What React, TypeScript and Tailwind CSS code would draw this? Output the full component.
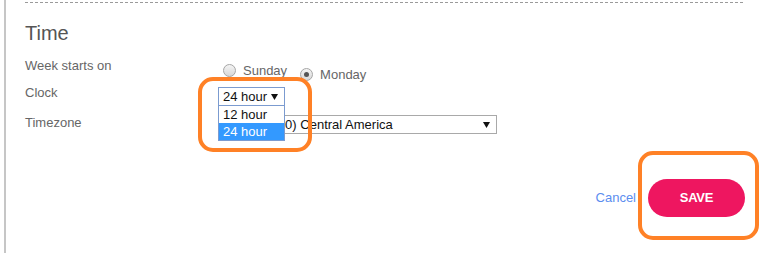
import React from 'react';

const Radio = ({ label, checked }: { label: string; checked?: boolean }) => (
  <div className="flex items-center">
    <span className="flex h-[13px] w-[13px] items-center justify-center rounded-full border border-[#a6a6a6] bg-gradient-to-b from-[#f4f4f4] to-[#d8d8d8]">
      {checked && <span className="h-[5px] w-[5px] rounded-full bg-[#555]" />}
    </span>
    <span className="ml-[7px] text-[13px] leading-[15px] text-[#666]">{label}</span>
  </div>
);

const Arrow = () => (
  <svg width="7" height="6" viewBox="0 0 7 6" className="shrink-0">
    <path d="M0 0 H7 L3.5 6 Z" fill="#111" />
  </svg>
);

export default function App() {
  return (
    <div className="relative h-[253px] w-[767px] overflow-hidden bg-white font-['Liberation_Sans',Arial,sans-serif]">
      <div className="ml-1 flex h-full flex-col border-l-2 border-[#c6c6c6] pl-[19px] pr-[22px]">
        <div className="mt-[2px] h-px bg-[repeating-linear-gradient(to_right,#9a9a9a_0_3px,transparent_3px_5px)]" />

        <h2 className="mt-[19px] text-[20px] leading-[23px] text-[#555]">Time</h2>

        <div className="mt-[13px] grid grid-cols-[193px_1fr]">
          {/* week starts on */}
          <div className="h-[27px] text-[13px] leading-[15px] text-[#666]">Week starts on</div>
          <div className="mt-[5px] flex h-[22px] gap-[15px] pl-[5px]">
            <div className="-mr-[2px]"><Radio label="Sunday" /></div>
            <Radio label="Monday" checked />
          </div>

          {/* clock */}
          <div className="h-[30px] text-[13px] leading-[15px] text-[#666]">Clock</div>
          <div className="relative z-10 h-[30px]">
            <div className="mt-[2px] flex h-[19px] w-[67px] items-center justify-between border border-[#7b9bd0] bg-white pl-[4px] pr-[6px] text-[13px] text-[#111]">
              <span>24 hour</span>
              <Arrow />
            </div>
            <div className="absolute left-0 top-[20px] w-[67px] border border-[#7b9bd0] bg-white text-[13px] leading-[17px] text-[#111]">
              <div className="pl-[4px]">12 hour</div>
              <div className="bg-[#3399ff] pl-[4px] text-white">24 hour</div>
            </div>
          </div>

          {/* timezone */}
          <div className="text-[13px] leading-[15px] text-[#666]">Timezone</div>
          <div className="flex h-[19px] w-[279px] items-center justify-between border border-[#a9a9a9] bg-white pl-[4px] pr-[6px] text-[13px] text-[#111]">
            <span>(GMT-06:00) Central America</span>
            <Arrow />
          </div>
        </div>

        <div className="mt-[45px] flex items-center justify-end gap-[12px]">
          <button className="text-[13px] text-[#5b8def]">Cancel</button>
          <button className="h-[38px] w-[97px] rounded-full bg-[#ee1660] text-[13px] font-bold tracking-[-0.2px] text-white">
            SAVE
          </button>
        </div>
      </div>

      {/* annotation rings */}
      <div className="pointer-events-none absolute left-[198px] top-[77px] h-[75px] w-[114px] rounded-[15px] border-4 border-[#ff8126]" />
      <div className="pointer-events-none absolute left-[638px] top-[151px] h-[89px] w-[121px] rounded-[15px] border-4 border-[#ff8126]" />
    </div>
  );
}
